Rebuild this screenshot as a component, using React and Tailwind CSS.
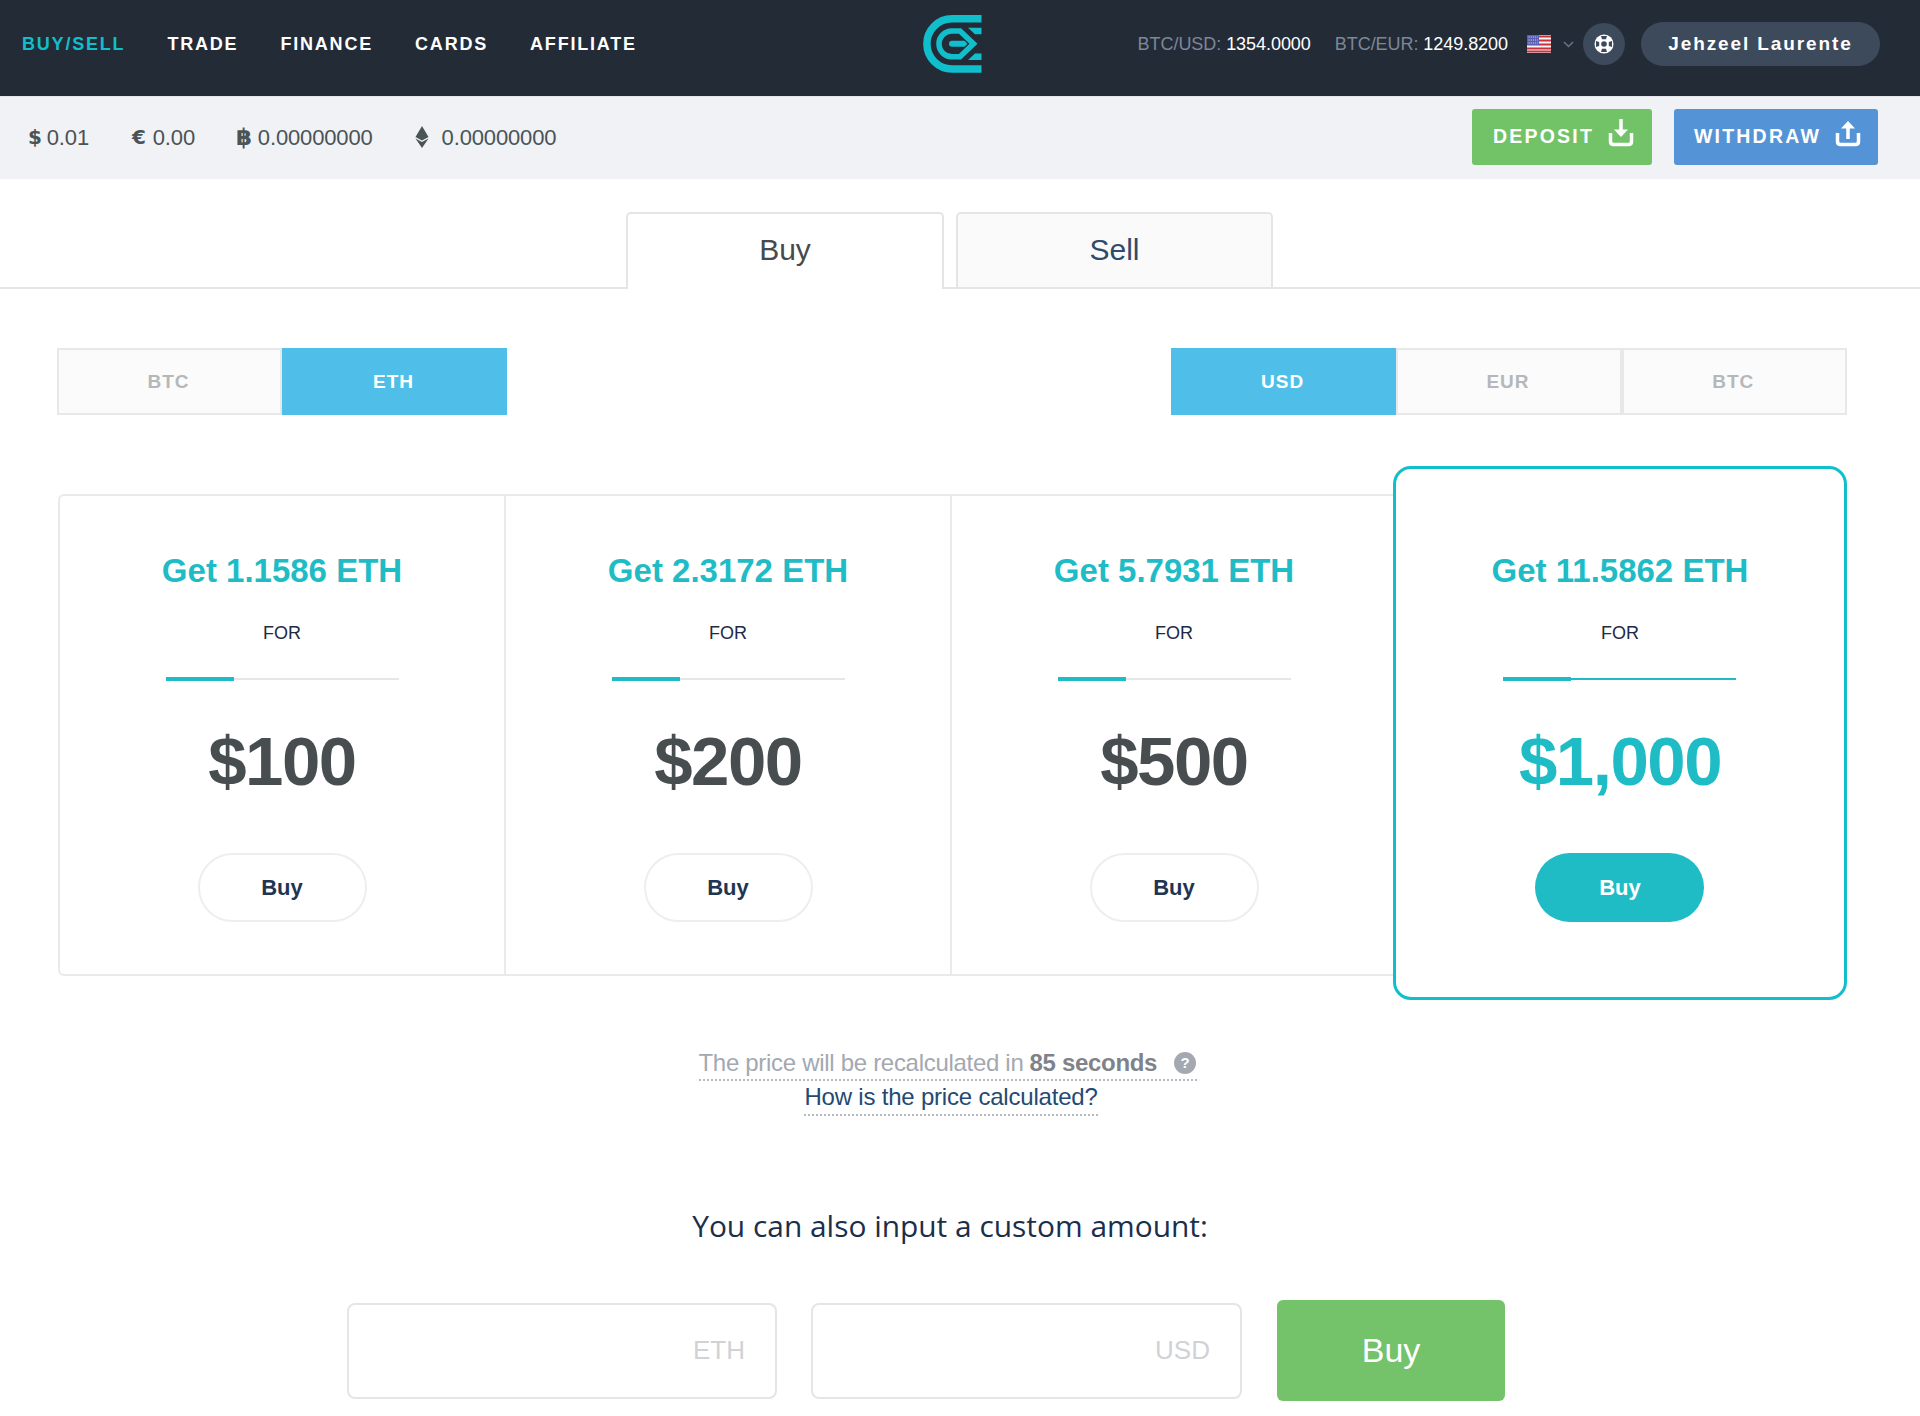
import React from "react";

const sans = "font-['Liberation_Sans',Arial,sans-serif]";

const Logo = () => (
  <svg width="59" height="58" viewBox="0 0 59 58" fill="none" className="mt-[-1px]">
    <path d="M58.5 3.75H29A25.1 25.1 0 0 0 29 53.95H58.5" stroke="#10bfcb" strokeWidth="7.5" />
    <path d="M50.5 28.85L37 16H28.8A12.85 12.85 0 0 0 28.8 41.7H37Z" stroke="#10bfcb" strokeWidth="5.5" />
    <path d="M45 12.7H58.5V19.3H52Z M45 45H58.5V38.4H52Z" fill="#10bfcb" />
    <path d="M29 25.85H41.5L44.5 28.85L41.5 31.85H29A3 3 0 0 1 29 25.85Z" fill="#10bfcb" />
  </svg>
);

const Flag = () => (
  <svg width="24" height="18" viewBox="0 0 24 18">
    <rect width="24" height="18" fill="#f4f4f4" />
    <path d="M0 1.5H24M0 5.5H24M0 9.5H24M0 13.5H24M0 16.5H24" stroke="#c8323c" strokeWidth="2" />
    <rect width="12" height="10" fill="#5a5fb4" />
    <path d="M1.5 2H11M1.5 5H11M1.5 8H11" stroke="#d8d8f0" strokeWidth="1" strokeDasharray="1 1.2" />
  </svg>
);

const Support = () => (
  <svg width="20" height="20" viewBox="0 0 20 20">
    <circle cx="10" cy="10" r="9.5" fill="#fff" />
    <circle cx="10" cy="10" r="2.8" fill="#3d4a5c" />
    <path d="M7 2H13L12 5.2H8ZM7 18H13L12 14.8H8ZM2 7V13L5.2 12V8ZM18 7V13L14.8 12V8Z" fill="#3d4a5c" />
  </svg>
);

const TrayIcon = ({ up }) => (
  <svg width="26" height="28" viewBox="0 0 26 28" fill="none" stroke="#fff" strokeWidth="3.5" className="-mt-[8px]">
    <path d="M2.5 14V22.5Q2.5 25.5 5.5 25.5H20.5Q23.5 25.5 23.5 22.5V14" />
    {up ? (
      <>
        <path d="M13 20V6" />
        <path d="M6 9.5L13 2L20 9.5Z" fill="#fff" strokeWidth="0" />
      </>
    ) : (
      <>
        <path d="M13 0V13" />
        <path d="M6 10.5L13 18L20 10.5Z" fill="#fff" strokeWidth="0" />
      </>
    )}
  </svg>
);

const Eth = () => (
  <svg width="14" height="22" viewBox="0 0 14 22" fill="#4a5355">
    <path d="M7 0L13.5 11L7 14.5L0.5 11Z" />
    <path d="M0.5 12.5L7 16L13.5 12.5L7 22Z" />
  </svg>
);

const nav = ["TRADE", "FINANCE", "CARDS", "AFFILIATE"];

const cards = [
  { get: "Get 1.1586 ETH", price: "$100", w: "w-[444px]" },
  { get: "Get 2.3172 ETH", price: "$200", w: "w-[446px]" },
  { get: "Get 5.7931 ETH", price: "$500", w: "w-[446px]" },
];

const Seg = ({ label, active }) => (
  <div
    className={`h-[67px] pr-[2px] pt-[1px] flex items-center justify-center text-[19px] font-bold tracking-[1px] border-2 ${
      active
        ? "bg-[#4fbfe9] border-[#4fbfe9] text-white"
        : "bg-[#fbfbfb] border-[#e6e8ea] text-[#b5b8ba]"
    }`}
  >
    {label}
  </div>
);

const CardBody = ({ get, price, featured }) => (
  <div className="flex flex-col items-center">
    <div className="text-[33px] leading-[40px] font-bold text-[#1fbcc6] whitespace-nowrap">{get}</div>
    <div className="mt-[31px] text-[18px] leading-[22px] text-[#1f2a44]">FOR</div>
    <div className={`mt-[34px] w-[233px] h-[2px] flex items-center ${featured ? "bg-[#1fbcc6]" : "bg-[#e4e6e8]"}`}>
      <div className="w-[68px] h-[4px] bg-[#1fbcc6]" />
    </div>
    <div
      className={`mt-[46px] text-[69px] leading-[72px] font-bold tracking-[-1.5px] whitespace-nowrap ${
        featured ? "text-[#1fbcc6]" : "text-[#484e50]"
      }`}
    >
      {price}
    </div>
    <div
      className={`mt-[55px] w-[169px] h-[69px] rounded-full flex items-center justify-center text-[22px] font-bold ${
        featured ? "bg-[#1fbcc6] text-white" : "bg-white border-2 border-[#eceef0] text-[#1f3553]"
      }`}
    >
      Buy
    </div>
  </div>
);

export default function App() {
  return (
    <div className={`${sans} bg-white min-h-[1416px] w-[1920px]`}>
      <header className="h-[96px] pb-[8px] bg-[#232b37] flex items-center">
        <div className="w-[923px] pl-[22px] flex gap-[42px] text-[18px] font-bold tracking-[1.8px] text-white">
          <span className="text-[#10bfcb]">BUY/SELL</span>
          {nav.map((n) => (
            <span key={n}>{n}</span>
          ))}
        </div>
        <Logo />
        <div className="flex-1 flex items-center justify-end pr-[40px]">
          <div className="text-[18px] tracking-[-0.05px] text-[#7d8797] whitespace-nowrap">
            BTC/USD: <span className="text-white">1354.0000</span>
          </div>
          <div className="ml-[24px] text-[18px] tracking-[-0.05px] text-[#7d8797] whitespace-nowrap">
            BTC/EUR: <span className="text-white">1249.8200</span>
          </div>
          <div className="ml-[19px]">
            <Flag />
          </div>
          <svg className="ml-[12px]" width="11" height="7" viewBox="0 0 11 7" fill="none" stroke="#65758a" strokeWidth="1.5">
            <path d="M1 1L5.5 5.5L10 1" />
          </svg>
          <div className="ml-[9px] w-[42px] h-[42px] rounded-full bg-[#3d4a5c] flex items-center justify-center">
            <Support />
          </div>
          <div className="ml-[16px] w-[239px] h-[44px] rounded-full bg-[#3d4a5c] flex items-center justify-center text-[19px] font-bold tracking-[1.9px] text-white whitespace-nowrap">
            Jehzeel Laurente
          </div>
        </div>
      </header>

      <div className="h-[83px] pb-[2px] bg-[#f0f2f6] border-t border-[#e4e6ea] flex items-center pl-[28px] pr-[42px] text-[22px] tracking-[-0.15px] text-[#4a5355]">
        <span className="font-['DejaVu_Sans',sans-serif] text-[20px] font-bold">$</span>
        <span className="ml-[5px]">0.01</span>
        <span className="ml-[43px] font-['DejaVu_Sans',sans-serif] text-[20px] font-bold">€</span>
        <span className="ml-[7px]">0.00</span>
        <span className="ml-[41px] font-['DejaVu_Sans',sans-serif] text-[23px] font-bold">฿</span>
        <span className="ml-[6px]">0.00000000</span>
        <span className="ml-[42px]">
          <Eth />
        </span>
        <span className="ml-[13px]">0.00000000</span>
        <div className="ml-auto flex gap-[22px]">
          <div className="w-[180px] h-[56px] bg-[#72c268] rounded-[3px] flex items-center justify-center gap-[14px] pl-[3px] text-white text-[19.5px] font-bold tracking-[2.2px]">
            DEPOSIT
            <TrayIcon />
          </div>
          <div className="w-[204px] h-[56px] bg-[#5494d6] rounded-[3px] flex items-center justify-center gap-[14px] pl-[3px] text-white text-[19.5px] font-bold tracking-[2.2px]">
            WITHDRAW
            <TrayIcon up />
          </div>
        </div>
      </div>

      <div className="pt-[33px] pl-[626px] flex gap-[12px] border-b-2 border-[#e4e5e6] text-[30px]">
        <div className="w-[318px] h-[77px] pb-[4px] -mb-[2px] bg-white border-2 border-b-0 border-[#e4e5e6] rounded-t-[5px] flex items-center justify-center text-[#47494c]">
          Buy
        </div>
        <div className="w-[317px] h-[75px] pb-[2px] bg-[#fafafa] border-2 border-b-0 border-[#e4e5e6] rounded-t-[5px] flex items-center justify-center text-[#2f4a6b]">
          Sell
        </div>
      </div>

      <div className="mt-[59px] pl-[57px] pr-[73px] flex justify-between">
        <div className="grid grid-cols-2 w-[450px]">
          <Seg label="BTC" />
          <Seg label="ETH" active />
        </div>
        <div className="grid grid-cols-3 w-[676px]">
          <Seg label="USD" active />
          <Seg label="EUR" />
          <Seg label="BTC" />
        </div>
      </div>

      <div className="mt-[51px] pl-[58px] pr-[73px] flex items-center">
        <div className="mt-[3px] flex h-[482px] border-2 border-r-0 border-[#e8eaec] rounded-l-[6px]">
          {cards.map((c, i) => (
            <div
              key={c.price}
              className={`${c.w} flex justify-center pt-[55px] ${i > 0 ? "border-l-2 border-[#e8eaec]" : ""}`}
            >
              <CardBody {...c} />
            </div>
          ))}
        </div>
        <div className="-ml-[3px] flex-1 h-[534px] bg-white border-[3px] border-[#10bfcb] rounded-[18px] flex justify-center pt-[82px]">
          <CardBody get="Get 11.5862 ETH" price="$1,000" featured />
        </div>
      </div>

      <div className="w-[1900px] mt-[45px] flex flex-col items-center">
        <div className="w-[498px] mr-[5px] pt-[2px] border-b-2 border-dotted border-[#b5b9c0] text-[24px] leading-[32px] tracking-[-0.3px] text-[#a3a8b1] flex items-center whitespace-nowrap">
          <span>The price will be recalculated in</span>
          <span className="ml-[6px] font-bold text-[#7f8389]">85 seconds</span>
          <span className="ml-[17px] w-[22px] h-[22px] rounded-full bg-[#a3a8b1] text-white text-[15px] font-bold flex items-center justify-center tracking-normal">
            ?
          </span>
        </div>
        <div className="mt-[1px] ml-[2px] pb-[2px] border-b-2 border-dotted border-[#b5b9c0] text-[24px] leading-[30px] tracking-[-0.2px] text-[#244a73] whitespace-nowrap">
          How is the price calculated?
        </div>
        <div className="mt-[90px] font-['Open_Sans',sans-serif] text-[29.9px] leading-[40px] text-[#1b2f4b] whitespace-nowrap">
          You can also input a custom amount:
        </div>
      </div>

      <div className="mt-[54px] pl-[347px] flex items-center">
        <input
          placeholder="ETH"
          className="w-[430px] h-[96px] px-[30px] text-right text-[26px] border-2 border-[#e3e5e8] rounded-[8px] placeholder:text-[#d0d2d6]"
        />
        <input
          placeholder="USD"
          className="ml-[34px] w-[431px] h-[96px] px-[30px] text-right text-[26px] border-2 border-[#e3e5e8] rounded-[8px] placeholder:text-[#d0d2d6]"
        />
        <div className="ml-[35px] w-[228px] h-[101px] bg-[#74c26a] rounded-[6px] flex items-center justify-center text-[34px] text-white">
          Buy
        </div>
      </div>
    </div>
  );
}
